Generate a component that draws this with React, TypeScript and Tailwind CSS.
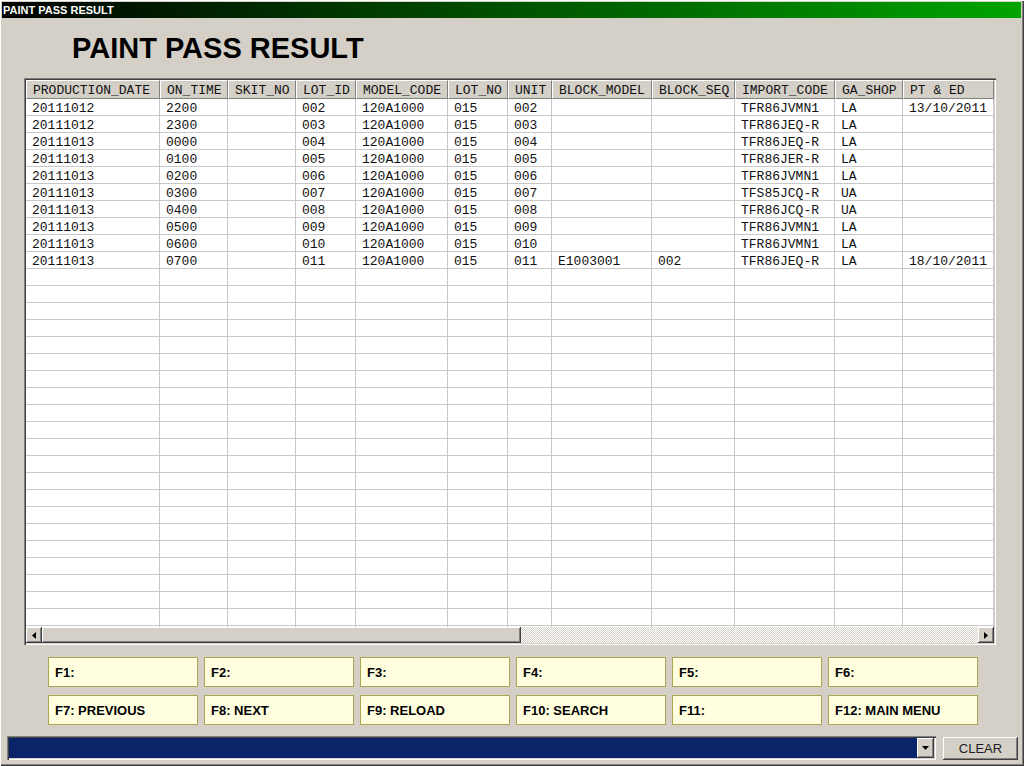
import React from "react";

const cols = [134, 68, 68, 60, 92, 60, 44, 100, 83, 100, 68, 91];
const headers = [
  "PRODUCTION_DATE",
  "ON_TIME",
  "SKIT_NO",
  "LOT_ID",
  "MODEL_CODE",
  "LOT_NO",
  "UNIT",
  "BLOCK_MODEL",
  "BLOCK_SEQ",
  "IMPORT_CODE",
  "GA_SHOP",
  "PT & ED",
];

const data: string[][] = [
  ["20111012", "2200", "", "002", "120A1000", "015", "002", "", "", "TFR86JVMN1", "LA", "13/10/2011"],
  ["20111012", "2300", "", "003", "120A1000", "015", "003", "", "", "TFR86JEQ-R", "LA", ""],
  ["20111013", "0000", "", "004", "120A1000", "015", "004", "", "", "TFR86JEQ-R", "LA", ""],
  ["20111013", "0100", "", "005", "120A1000", "015", "005", "", "", "TFR86JER-R", "LA", ""],
  ["20111013", "0200", "", "006", "120A1000", "015", "006", "", "", "TFR86JVMN1", "LA", ""],
  ["20111013", "0300", "", "007", "120A1000", "015", "007", "", "", "TFS85JCQ-R", "UA", ""],
  ["20111013", "0400", "", "008", "120A1000", "015", "008", "", "", "TFR86JCQ-R", "UA", ""],
  ["20111013", "0500", "", "009", "120A1000", "015", "009", "", "", "TFR86JVMN1", "LA", ""],
  ["20111013", "0600", "", "010", "120A1000", "015", "010", "", "", "TFR86JVMN1", "LA", ""],
  ["20111013", "0700", "", "011", "120A1000", "015", "011", "E1003001", "002", "TFR86JEQ-R", "LA", "18/10/2011"],
];

const rows: string[][] = [
  ...data,
  ...Array.from({ length: 22 }, () => Array(12).fill("")),
];

const fkeys = [
  "F1:",
  "F2:",
  "F3:",
  "F4:",
  "F5:",
  "F6:",
  "F7: PREVIOUS",
  "F8: NEXT",
  "F9: RELOAD",
  "F10: SEARCH",
  "F11:",
  "F12: MAIN MENU",
];

const raised =
  "shadow-[inset_-1px_-1px_#404040,inset_1px_1px_#ffffff,inset_-2px_-2px_#808080,inset_2px_2px_#d4d0c8]";

function Tri({ dir }: { dir: "left" | "right" | "down" }) {
  if (dir === "left")
    return (
      <svg width="4" height="7" viewBox="0 0 4 7">
        <path d="M4 0 L0 3.5 L4 7 Z" fill="#000" />
      </svg>
    );
  if (dir === "right")
    return (
      <svg width="4" height="7" viewBox="0 0 4 7">
        <path d="M0 0 L4 3.5 L0 7 Z" fill="#000" />
      </svg>
    );
  return (
    <svg width="7" height="4" viewBox="0 0 7 4">
      <path d="M0 0 L7 0 L3.5 4 Z" fill="#000" />
    </svg>
  );
}

export default function App() {
  return (
    <div className="w-[1024px] h-[766px] bg-[#d4d0c8] flex flex-col overflow-hidden shadow-[inset_1px_1px_#ffffff,inset_-1px_-1px_#404040,inset_-2px_-2px_#808080]">
      {/* Title bar */}
      <div className="mt-[2px] ml-[2px] mr-[3px] h-[16px] flex items-center pl-[1px] bg-[linear-gradient(to_right,#000000,#00a400)]">
        <span className="text-white text-[11px] font-bold leading-none font-['Liberation_Sans',Arial,sans-serif]">
          PAINT PASS RESULT
        </span>
      </div>

      {/* Heading */}
      <div className="mt-[16px] pl-[72px] h-[29px] text-[29px] leading-[29px] font-bold text-black font-['Liberation_Sans',Arial,sans-serif]">
        PAINT PASS RESULT
      </div>

      {/* Grid */}
      <div className="mt-[15px] ml-[24px] w-[972px] h-[567px] flex flex-col p-[2px] bg-white shadow-[inset_1px_1px_#808080,inset_2px_2px_#404040,inset_-1px_-1px_#ffffff,inset_-2px_-2px_#d4d0c8] font-['Liberation_Mono','Courier_New',monospace] text-[13px] text-[#111]">
        <div className="flex h-[19px] shrink-0">
          {headers.map((h, i) => (
            <div
              key={i}
              style={{ width: cols[i] }}
              className="shrink-0 h-full bg-[#d4d0c8] border-l border-t border-l-white border-t-white border-r border-b border-r-[#808080] border-b-[#808080] pl-[6px] pt-[1px] flex items-center whitespace-pre leading-none overflow-hidden"
            >
              {h}
            </div>
          ))}
        </div>
        <div className="flex-1 overflow-hidden bg-white">
          {rows.map((r, ri) => (
            <div key={ri} className="flex h-[17px]">
              {r.map((c, ci) => (
                <div
                  key={ci}
                  style={{ width: cols[ci] }}
                  className="shrink-0 h-full border-r border-b border-[#c8c8c8] pl-[6px] pt-[2px] flex items-center whitespace-pre leading-none overflow-hidden"
                >
                  {c}
                </div>
              ))}
            </div>
          ))}
        </div>
        {/* Horizontal scrollbar */}
        <div className="flex h-[16px] shrink-0">
          <div className={`w-[16px] h-full bg-[#d4d0c8] flex items-center justify-center ${raised}`}>
            <Tri dir="left" />
          </div>
          <div className={`w-[479px] h-full bg-[#d4d0c8] ${raised}`} />
          <div className="flex-1 h-full bg-[repeating-conic-gradient(#d4d0c8_0%_25%,#ffffff_0%_50%)] bg-[length:2px_2px]" />
          <div className={`w-[16px] h-full bg-[#d4d0c8] flex items-center justify-center ${raised}`}>
            <Tri dir="right" />
          </div>
        </div>
      </div>

      {/* Function keys */}
      <div className="mt-[12px] pl-[48px] grid grid-cols-[repeat(6,150px)] gap-x-[6px] gap-y-[8px]">
        {fkeys.map((k, i) => (
          <div
            key={i}
            className="h-[30px] bg-[#ffffe0] border border-[#a8a850] flex items-center pl-[6px] text-[13px] font-bold text-black leading-none font-['Liberation_Sans',Arial,sans-serif]"
          >
            {k}
          </div>
        ))}
      </div>

      {/* Bottom bar */}
      <div className="mt-[11px] pl-[7px] flex items-start gap-[7px]">
        <div className="w-[929px] h-[24px] flex p-[2px] bg-[#0a246a] shadow-[inset_1px_1px_#808080,inset_2px_2px_#404040,inset_-1px_-1px_#ffffff,inset_-2px_-2px_#d4d0c8]">
          <div className="flex-1" />
          <div className={`w-[17px] h-full bg-[#d4d0c8] flex items-center justify-center ${raised}`}>
            <Tri dir="down" />
          </div>
        </div>
        <div
          className={`w-[75px] h-[23px] mt-[1px] bg-[#d4d0c8] flex items-center justify-center text-[13px] text-[#202020] leading-none font-['Liberation_Sans',Arial,sans-serif] ${raised}`}
        >
          CLEAR
        </div>
      </div>
    </div>
  );
}
